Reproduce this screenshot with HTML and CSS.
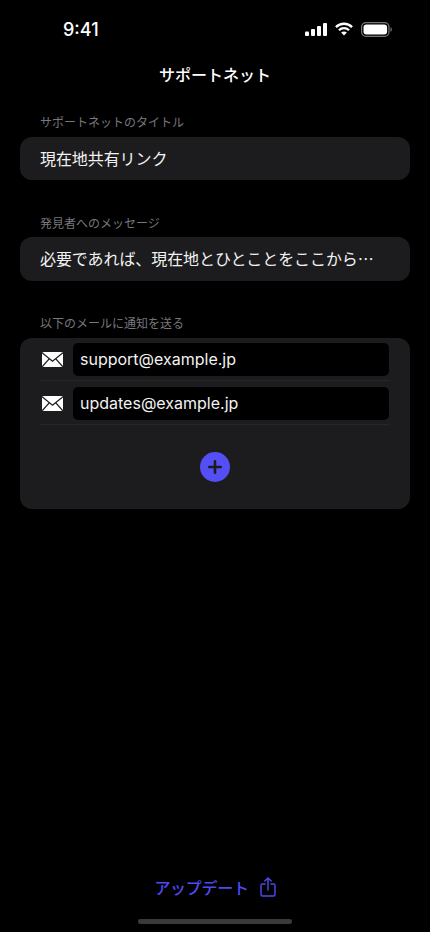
FILE: index.html
```html
<!DOCTYPE html>
<html lang="ja">
<head>
<meta charset="utf-8">
<title>サポートネット</title>
<link rel="stylesheet" href="styles.css">
</head>
<body>
<div class="page">
  <div class="status">
    <span class="time">9:41</span>
    <span class="status-icons">
      <svg width="22" height="13" viewBox="0 0 22 13" fill="#fff"><rect x="0" y="8.500" width="4" height="4.500" rx="1"/><rect x="6" y="6" width="4" height="7" rx="1"/><rect x="12" y="3" width="4" height="10" rx="1"/><rect x="18" y="0" width="4" height="13" rx="1"/></svg>
      <svg width="18" height="14" viewBox="0 0 19 14" fill="none" stroke="#fff" stroke-width="2.4"><path d="M1 5a12 12 0 0 1 17 0"/><path d="M4.200 8.300a7.500 7.500 0 0 1 10.600 0"/><path d="M9.500 13.800l-3-3a4.200 4.200 0 0 1 6 0z" fill="#fff" stroke="none"/></svg>
      <svg width="31" height="15" viewBox="0 0 31 15"><rect x="0.600" y="0.600" width="27.400" height="13.800" rx="4.400" fill="none" stroke="#777" stroke-width="1.200"/><rect x="2.500" y="2.500" width="23.600" height="10" rx="3" fill="#fff"/><path d="M29.500 5.200c.9.300 1.300 1.200 1.300 2.300s-.4 2-1.300 2.300z" fill="#777"/></svg>
    </span>
  </div>
  <h1 class="title">サポートネット</h1>

  <section class="group">
    <div class="label">サポートネットのタイトル</div>
    <div class="card field">現在地共有リンク</div>
  </section>

  <section class="group">
    <div class="label">発見者へのメッセージ</div>
    <div class="card field">必要であれば、現在地とひとことをここから…</div>
  </section>

  <section class="group">
    <div class="label">以下のメールに通知を送る</div>
    <div class="card emails">
      <div class="email-row">
        <svg class="mail" width="21" height="15" viewBox="0 0 21 15"><rect width="21" height="15" rx="1.800" fill="#fff"/><path d="M0.300 1L10.500 9.200L20.700 1M0.300 14.600L7.400 6.600M20.700 14.600L13.600 6.600" fill="none" stroke="#1c1c1e" stroke-width="1.300"/></svg>
        <div class="email-input">support@example.jp</div>
      </div>
      <div class="email-row">
        <svg class="mail" width="21" height="15" viewBox="0 0 21 15"><rect width="21" height="15" rx="1.800" fill="#fff"/><path d="M0.300 1L10.500 9.200L20.700 1M0.300 14.600L7.400 6.600M20.700 14.600L13.600 6.600" fill="none" stroke="#1c1c1e" stroke-width="1.300"/></svg>
        <div class="email-input">updates@example.jp</div>
      </div>
      <div class="add-wrap">
        <span class="add">
          <svg width="14" height="14" viewBox="0 0 14 14" stroke="#1c1c1e" stroke-width="2.600" stroke-linecap="round"><path d="M7 1.300v11.400M1.300 7h11.400"/></svg>
        </span>
      </div>
    </div>
  </section>

  <div class="footer">
    <div class="update">
      <span class="update-text">アップデート</span>
      <svg width="16" height="20" viewBox="0 0 16 20" fill="none" stroke="#4f4bf0" stroke-width="1.400" stroke-linecap="round" stroke-linejoin="round"><path d="M5 7H2.500A1.500 1.500 0 0 0 1 8.500v9A1.500 1.500 0 0 0 2.500 19h11a1.500 1.500 0 0 0 1.500-1.500v-9A1.500 1.500 0 0 0 13.500 7H11"/><path d="M8 13V1M4.800 4L8 1l3.200 3"/></svg>
    </div>
    <div class="home-bar"></div>
  </div>
</div>
</body>
</html>
```

FILE: styles.css
```css
* { box-sizing: border-box; }
html, body { margin: 0; padding: 0; background: #000; }
body { font-family: "Inter", "Noto Sans CJK JP", sans-serif; color: #fff; }
.page { width: 430px; height: 932px; display: flex; flex-direction: column; padding: 0 20px; overflow: hidden; }
.status { height: 58px; margin: 0 -20px; padding: 0 38px 0 63px; display: flex; align-items: center; justify-content: space-between; }
.time { font-size: 18px; font-weight: 500; font-family: "Inter", sans-serif; }
.status-icons { display: flex; align-items: center; gap: 8px; margin-right: 0; }
.title { margin: 0; height: 32px; line-height: 32px; text-align: center; font-size: 16px; font-weight: 500; font-family: "Noto Sans CJK JP", sans-serif; }
.group { margin-top: 24px; }
.group + .group { margin-top: 34.5px; }
.label { padding-left: 20px; height: 16px; margin-bottom: 6.5px; line-height: 16px; font-size: 12px; color: #77777c; font-family: "Noto Sans CJK JP", sans-serif; }
.card { background: #1c1c1e; border-radius: 12px; }
.field { height: 43.5px; line-height: 43.5px; padding-left: 20px; font-size: 16px; letter-spacing: -0.08px; color: #f2f2f2; font-family: "Noto Sans CJK JP", sans-serif; white-space: nowrap; }
.emails { height: 171.5px; padding: 5.5px 21px 0 20px; }
.email-row { display: flex; align-items: center; gap: 10px; height: 38px; padding-bottom: 4.5px; margin-bottom: 6px; border-bottom: 1px solid #27272a; }
.mail { flex: none; margin-left: 2px; }
.email-input { flex: 1; height: 32.5px; line-height: 32.5px; padding-left: 7px; background: #000; border-radius: 5px; font-size: 16px; color: #f2f2f2; font-family: "Inter", sans-serif; }
.add-wrap { display: flex; justify-content: center; padding-top: 21px; }
.add { width: 30px; height: 30px; border-radius: 50%; background: #544ff5; display: flex; align-items: center; justify-content: center; }
.footer { margin-top: auto; display: flex; flex-direction: column; align-items: center; }
.update { display: flex; align-items: center; gap: 11px; height: 24px; color: #4f4bf0; font-size: 16px; font-weight: 500; font-family: "Noto Sans CJK JP", sans-serif; }
.update-text { letter-spacing: -0.3px; }
.home-bar { width: 154px; height: 4.5px; border-radius: 2.25px; background: #3a3a3c; margin-top: 20px; margin-bottom: 8.5px; }
```
